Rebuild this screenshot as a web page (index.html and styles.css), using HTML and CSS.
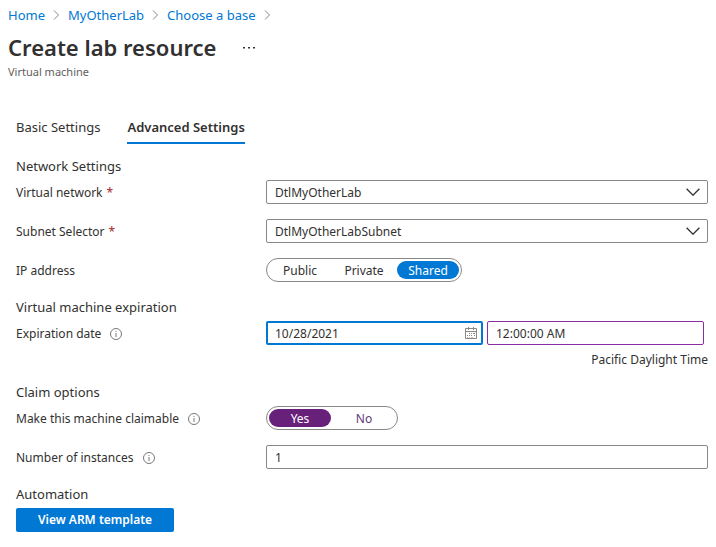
FILE: index.html
```html
<!DOCTYPE html>
<html lang="en">
<head>
<meta charset="utf-8">
<title>Create lab resource</title>
<link rel="stylesheet" href="styles.css">
</head>
<body>
<svg class="sprite" aria-hidden="true">
  <symbol id="chevron-right" viewBox="0 0 8 12"><path d="M1.500 1.500 6 6l-4.500 4.500" fill="none" stroke="currentColor"/></symbol>
  <symbol id="chevron-down" viewBox="0 0 14 8"><path d="M.6.8 7 7.200 13.400.8" fill="none" stroke="currentColor" stroke-width="1.300"/></symbol>
  <symbol id="info" viewBox="0 0 12 12"><circle cx="6" cy="6" r="5.500" fill="none" stroke="currentColor"/><path d="M6 5v4M6 3v1" stroke="currentColor"/></symbol>
</svg>

<header class="page-header">
  <nav class="breadcrumb" aria-label="Breadcrumb">
    <a href="#">Home</a>
    <svg class="separator"><use href="#chevron-right"/></svg>
    <a href="#">MyOtherLab</a>
    <svg class="separator"><use href="#chevron-right"/></svg>
    <a href="#">Choose a base</a>
    <svg class="separator"><use href="#chevron-right"/></svg>
  </nav>
  <div class="title-row">
    <h1>Create lab resource</h1>
    <button class="more" type="button" aria-label="More actions">
      <svg viewBox="0 0 12 2"><path d="M0 0h2v1.500H0zM5 0h2v1.500H5zM10 0h2v1.500h-2z" fill="currentColor"/></svg>
    </button>
  </div>
  <p class="subtitle">Virtual machine</p>
</header>

<main>
  <nav class="tabs" aria-label="Settings">
    <a class="tab" href="#">Basic Settings</a>
    <a class="tab active" href="#" aria-current="page">Advanced Settings</a>
  </nav>

  <form>
    <section>
      <h2>Network Settings</h2>
      <div class="row">
        <label class="label" for="network">Virtual network <span class="required">*</span></label>
        <div class="select">
          <select class="field" id="network"><option>DtlMyOtherLab</option></select>
          <svg class="caret"><use href="#chevron-down"/></svg>
        </div>
      </div>
      <div class="row">
        <label class="label" for="subnet">Subnet Selector <span class="required">*</span></label>
        <div class="select">
          <select class="field" id="subnet"><option>DtlMyOtherLabSubnet</option></select>
          <svg class="caret"><use href="#chevron-down"/></svg>
        </div>
      </div>
      <div class="row">
        <span class="label" id="ip-label">IP address</span>
        <div class="segments" role="radiogroup" aria-labelledby="ip-label">
          <label class="segment"><input type="radio" name="ip">Public</label>
          <label class="segment"><input type="radio" name="ip">Private</label>
          <label class="segment"><input type="radio" name="ip" checked>Shared</label>
        </div>
      </div>
    </section>

    <section>
      <h2>Virtual machine expiration</h2>
      <div class="row">
        <label class="label" for="date">Expiration date <svg class="info"><use href="#info"/></svg></label>
        <div class="date-time">
          <div class="date">
            <input class="field focused" id="date" type="text" value="10/28/2021">
            <svg class="calendar" viewBox="0 0 12 12">
              <path d="M.5 1.500h11v10H.5zM.5 4.500h11M3.500 0v3M8.500 0v3" fill="none" stroke="currentColor"/>
              <path d="M4 6h1v1H4zM6 6h1v1H6zM8 6h2v1H8zM2 8h1v1H2zM4 8h1v1H4zM6 8h1v1H6zM9 8h1v1H9zM2 10h1v.6H2zM4 10h1v.6H4zM6 10h2v.6H6z" fill="currentColor"/>
            </svg>
          </div>
          <input class="field changed" type="text" value="12:00:00 AM" aria-label="Expiration time">
        </div>
      </div>
      <p class="timezone">Pacific Daylight Time</p>
    </section>

    <section>
      <h2>Claim options</h2>
      <div class="row">
        <span class="label" id="claim-label">Make this machine claimable <svg class="info"><use href="#info"/></svg></span>
        <div class="segments edited" role="radiogroup" aria-labelledby="claim-label">
          <label class="segment"><input type="radio" name="claim" checked>Yes</label>
          <label class="segment"><input type="radio" name="claim">No</label>
        </div>
      </div>
      <div class="row">
        <label class="label" for="count">Number of instances <svg class="info"><use href="#info"/></svg></label>
        <input class="field" id="count" type="text" value="1">
      </div>
    </section>

    <section>
      <h2>Automation</h2>
      <button class="primary" type="button">View ARM template</button>
    </section>
  </form>
</main>
</body>
</html>
```
FILE: styles.css
```css
* {
  box-sizing: border-box;
}

body {
  margin: 0;
  padding: 5px 8px 12px;
  background: #fff;
  color: #323130;
  font: 13px/20px "Noto Sans", "Open Sans", sans-serif;
}

h1, h2, p {
  margin: 0;
}

input, select, button {
  font: inherit;
  color: inherit;
}

.sprite {
  position: absolute;
  width: 0;
  height: 0;
}

.breadcrumb {
  display: flex;
  align-items: center;
  gap: 7px;
}

.breadcrumb a {
  color: #0078d4;
  text-decoration: none;
}

.separator {
  width: 9px;
  height: 12px;
  color: #8a8886;
}

.title-row {
  display: flex;
  align-items: center;
  gap: 21px;
  margin-top: 6px;
}

h1 {
  font-size: 22px;
  line-height: 32px;
  font-weight: 600;
}

.more {
  display: flex;
  padding: 8px 6px 6px;
  border: 0;
  background: none;
}

.more svg {
  width: 12px;
  height: 2px;
}

.subtitle {
  color: #605e5c;
  font-size: 11px;
  line-height: 18px;
}

main {
  padding-left: 8px;
}

.tabs {
  display: flex;
  gap: 27px;
  margin-top: 35px;
}

.tab {
  padding: 1px 0 5px;
  border-bottom: 2px solid transparent;
  color: inherit;
  text-decoration: none;
}

.tab.active {
  border-color: #0078d4;
  font-weight: 600;
}

form {
  display: flex;
  flex-direction: column;
  gap: 15px;
  margin-top: 12px;
}

h2 {
  margin-bottom: 4px;
  font-size: 13px;
  line-height: 20px;
  font-weight: 400;
}

.row {
  display: grid;
  grid-template-columns: 250px 1fr;
  align-items: center;
  font-size: 12px;
}

.row + .row {
  margin-top: 15px;
}

.label {
  display: flex;
  align-items: center;
  padding-top: 2px;
}

.required {
  margin-left: 4px;
  color: #a4262c;
}

.info {
  width: 12px;
  height: 12px;
  margin-left: 9px;
  color: #797775;
}

.field {
  display: block;
  width: 100%;
  height: 24px;
  padding: 0 8px;
  border: 1px solid #8a8886;
  border-radius: 2px;
  outline: 0;
  background: #fff;
  appearance: none;
}

select.field {
  padding-top: 1px;
}

.field.focused {
  padding: 0 7px;
  border: 2px solid #0078d4;
}

.field.changed {
  border-color: #8a2da5;
}

.select, .date {
  position: relative;
}

.caret, .calendar {
  position: absolute;
  pointer-events: none;
}

.caret {
  top: 8px;
  right: 8px;
  width: 14px;
  height: 8px;
}

.calendar {
  top: 6px;
  right: 6px;
  width: 12px;
  height: 12px;
  color: #8a8886;
}

.date-time {
  display: grid;
  grid-template-columns: 1fr 1fr;
  gap: 4px;
  padding-right: 4px;
}

.timezone {
  margin-top: 8px;
  font-size: 12px;
  line-height: 14px;
  text-align: right;
}

.segments {
  display: flex;
  justify-self: start;
  gap: 2px;
  padding: 2px;
  border: 1px solid #8a8886;
  border-radius: 12px;
}

.segment {
  width: 62px;
  padding-top: 2px;
  border-radius: 9px;
  line-height: 16px;
  text-align: center;
}

.segment input {
  position: absolute;
  opacity: 0;
  margin: 0;
}

.segment:has(:checked) {
  background: #0078d4;
  color: #fff;
}

.edited .segment {
  color: #5c3a78;
}

.edited .segment:has(:checked) {
  background: #68217a;
  color: #fff;
}

.primary {
  height: 24px;
  padding: 0 22px;
  border: 0;
  border-radius: 2px;
  background: #0078d4;
  color: #fff;
  font-size: 12px;
  font-weight: 600;
}
```
